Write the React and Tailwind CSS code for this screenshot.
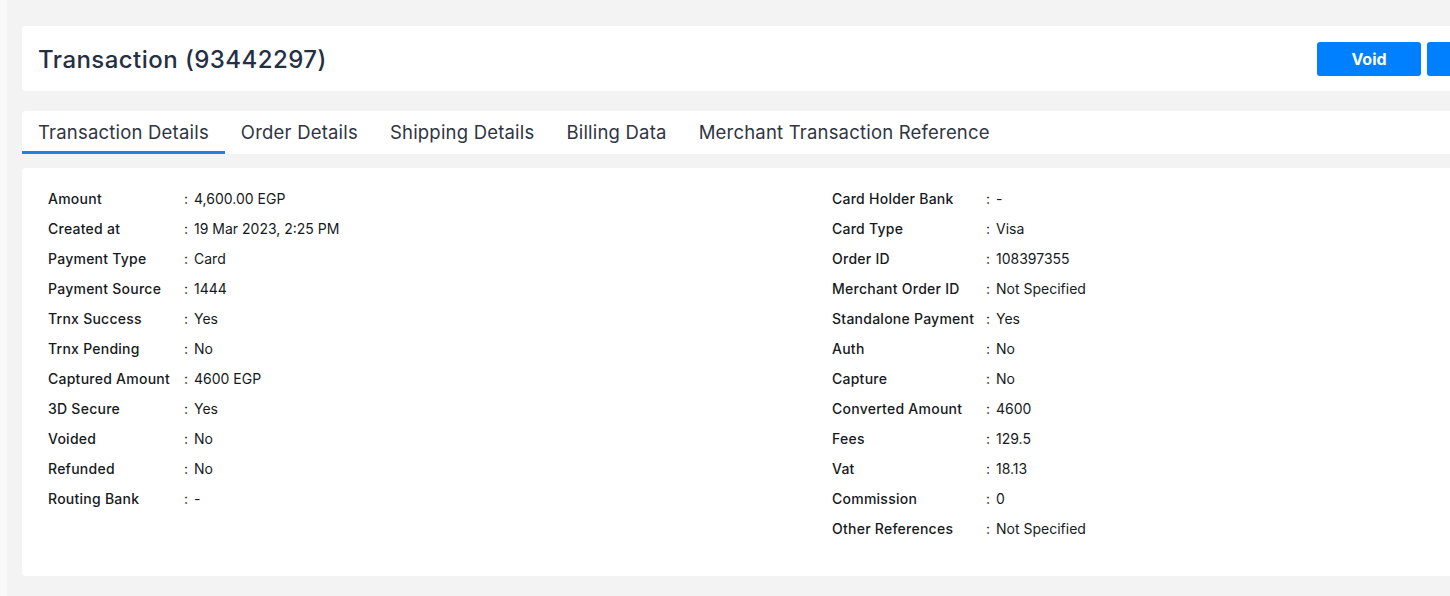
import React from 'react';

const leftRows = [
  ['Amount', '4,600.00 EGP'],
  ['Created at', '19 Mar 2023, 2:25 PM'],
  ['Payment Type', 'Card'],
  ['Payment Source', '1444'],
  ['Trnx Success', 'Yes'],
  ['Trnx Pending', 'No'],
  ['Captured Amount', '4600 EGP'],
  ['3D Secure', 'Yes'],
  ['Voided', 'No'],
  ['Refunded', 'No'],
  ['Routing Bank', '-'],
];

const rightRows = [
  ['Card Holder Bank', '-'],
  ['Card Type', 'Visa'],
  ['Order ID', '108397355'],
  ['Merchant Order ID', 'Not Specified'],
  ['Standalone Payment', 'Yes'],
  ['Auth', 'No'],
  ['Capture', 'No'],
  ['Converted Amount', '4600'],
  ['Fees', '129.5'],
  ['Vat', '18.13'],
  ['Commission', '0'],
  ['Other References', 'Not Specified'],
];

const tabs = ['Transaction Details', 'Order Details', 'Shipping Details', 'Billing Data', 'Merchant Transaction Reference'];

// one label : value line of the details table
const InfoRow = ({ label, value, labelWidth }) => (
  <div className="flex h-[30px] items-center text-[14px] text-[#161a22]">
    <span className={labelWidth + ' font-medium tracking-[0.25px]'}>{label}</span>
    <span className="w-[10px]">:</span>
    <span>{value}</span>
  </div>
);

export default function App() {
  return (
    <div
      className="h-[596px] w-full overflow-hidden bg-[#f9f9f9] pl-[7px]"
      style={{ fontFamily: 'Inter, "Noto Sans", sans-serif' }}
    >
      <div className="h-full w-[1560px] bg-[#f3f3f3] pl-[15px] pt-[26px]">
        {/* header */}
        <div className="flex h-[65px] w-[1520px] items-center justify-between rounded-[4px] bg-white pl-[16px] pr-[11px]">
          <h1 className="pt-[3px] text-[24px] font-medium tracking-[0.45px] text-[#252f43]">Transaction (93442297)</h1>
          <div className="flex gap-[6px]">
            <button className="h-[34px] w-[104px] rounded-[3px] bg-[#0080ff] text-[16px] font-bold text-white">Void</button>
            <button className="h-[34px] w-[104px] rounded-[3px] bg-[#0080ff] text-[16px] font-bold text-white"></button>
          </div>
        </div>

        {/* tabs */}
        <div className="mt-[20px] flex h-[43px] w-[1520px] rounded-[4px] bg-white">
          {tabs.map((t, i) => (
            <div
              key={t}
              className={
                i === 0
                  ? 'flex items-center border-b-[3px] border-[#1a82f0] px-[16px] pt-[4px] text-[18.5px] tracking-[0.2px] text-[#2f3542]'
                  : 'flex items-center border-b-[3px] border-transparent px-[16px] pt-[4px] text-[18.5px] tracking-[0.2px] text-[#2f3542]'
              }
            >
              {t}
            </div>
          ))}
        </div>

        {/* details */}
        <div className="mt-[14px] flex h-[408px] w-[1520px] rounded-[4px] bg-white pl-[26px] pt-[15px]">
          <div className="w-[784px]">
            {leftRows.map(([l, v]) => (
              <InfoRow key={l} label={l} value={v} labelWidth="w-[136px]" />
            ))}
          </div>
          <div>
            {rightRows.map(([l, v]) => (
              <InfoRow key={l} label={l} value={v} labelWidth="w-[154px]" />
            ))}
          </div>
        </div>
      </div>
    </div>
  );
}
